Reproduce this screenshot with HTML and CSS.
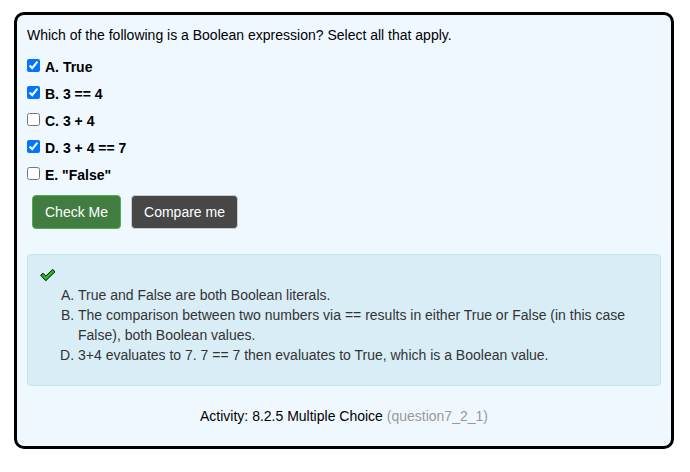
FILE: index.html
```html
<!DOCTYPE html>
<html lang="en">
<head>
<meta charset="utf-8">
<title>Multiple Choice</title>
<link rel="stylesheet" href="styles.css">
</head>
<body>
<main class="question">
  <form class="quiz">
    <p class="prompt">Which of the following is a Boolean expression? Select all that apply.</p>
    <label class="option"><input type="checkbox" checked><span>A. True</span></label>
    <label class="option"><input type="checkbox" checked><span>B. 3 == 4</span></label>
    <label class="option"><input type="checkbox"><span>C. 3 + 4</span></label>
    <label class="option"><input type="checkbox" checked><span>D. 3 + 4 == 7</span></label>
    <label class="option"><input type="checkbox"><span>E. "False"</span></label>
    <div class="actions">
      <button type="button" class="btn btn-check">Check Me</button>
      <button type="button" class="btn btn-compare">Compare me</button>
    </div>
  </form>
  <section class="feedback">
    <svg class="tick" viewBox="0 0 16 14" aria-hidden="true"><path d="M0.7 7.3 L3 5.2 L5.8 8 L12.7 1.5 L15 3.7 L5.8 12.7 Z"/></svg>
    <ol class="reasons">
      <li>True and False are both Boolean literals.</li>
      <li>The comparison between two numbers via == results in either True or False (in this case False), both Boolean values.</li>
      <li value="4">3+4 evaluates to 7. 7 == 7 then evaluates to True, which is a Boolean value.</li>
    </ol>
  </section>
  <p class="caption">Activity: 8.2.5 Multiple Choice <span class="qid">(question7_2_1)</span></p>
</main>
</body>
</html>
```
FILE: styles.css
```css
* { box-sizing: border-box; }
body {
  margin: 0;
  background: #fff;
  color: #000;
  font: 14px/20px "Liberation Sans", Arial, sans-serif;
}
.question {
  margin: 12px 16px 0 14px;
  padding: 10px;
  border: 3px solid #000;
  border-radius: 10px;
  background: #f0f8ff;
}
.prompt { margin: 0 0 12px; }
.option {
  display: flex;
  width: fit-content;
  margin-bottom: 7px;
  gap: 5px;
  font-weight: bold;
}
.option input {
  width: 13px;
  height: 13px;
  margin: 2px 0 0;
}
.actions {
  display: flex;
  gap: 10px;
  margin: 10px 5px 25px;
}
.btn {
  padding: 6px 12px;
  border: 1px solid #ccc;
  border-radius: 4px;
  color: #fff;
  font: inherit;
}
.btn-check { background: #417d41; border-color: #4cae4c; }
.btn-compare { background: #474747; }
.feedback {
  padding: 13px 12px 20px;
  border: 1px solid #bce8f1;
  border-radius: 4px;
  background: #d9edf7;
  color: #333;
}
.tick {
  display: block;
  width: 16px;
  height: 14px;
  margin-bottom: 3px;
  fill: #1fc01f;
  stroke: #000;
}
.reasons {
  margin: 0;
  padding-left: 38px;
  list-style-type: upper-alpha;
}
.caption { margin: 20px 0 10px; text-align: center; }
.qid { color: #999; }
```
